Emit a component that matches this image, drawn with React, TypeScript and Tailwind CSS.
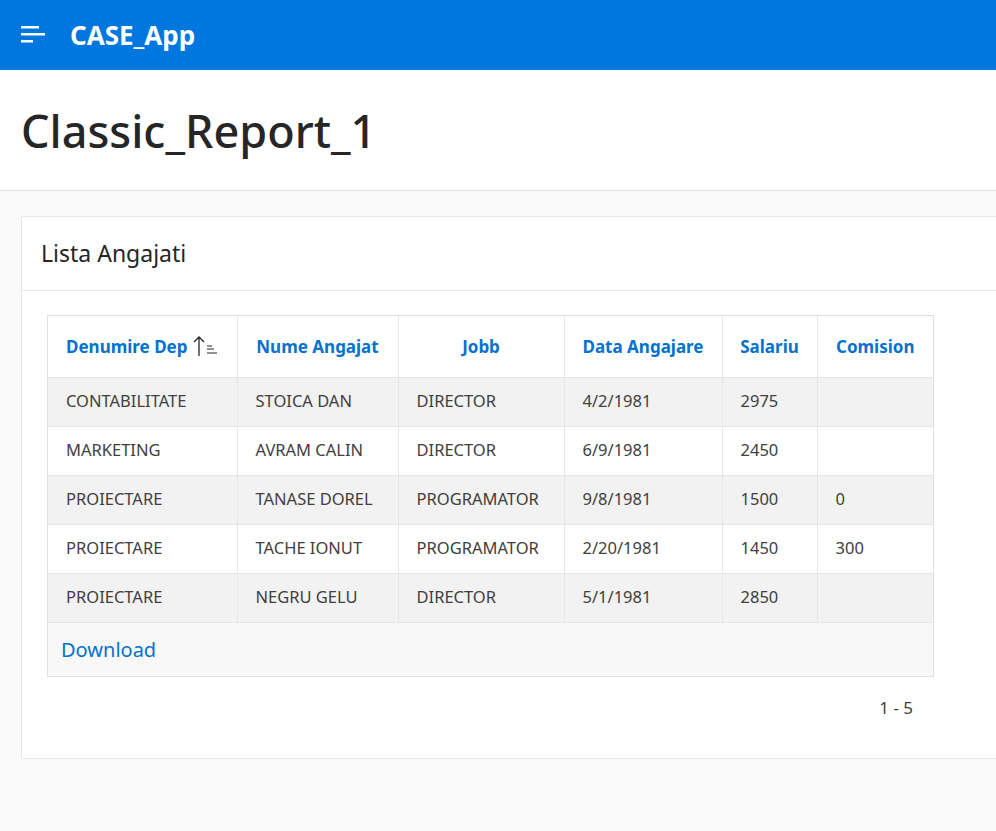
const columns = [
  { label: "Denumire Dep", width: "w-[189px]", sort: true },
  { label: "Nume Angajat", width: "w-[161px]" },
  { label: "Jobb", width: "w-[166px]" },
  { label: "Data Angajare", width: "w-[158px]" },
  { label: "Salariu", width: "w-[95px]" },
  { label: "Comision", width: "" },
];

const rows = [
  ["CONTABILITATE", "STOICA DAN", "DIRECTOR", "4/2/1981", "2975", ""],
  ["MARKETING", "AVRAM CALIN", "DIRECTOR", "6/9/1981", "2450", ""],
  ["PROIECTARE", "TANASE DOREL", "PROGRAMATOR", "9/8/1981", "1500", "0"],
  ["PROIECTARE", "TACHE IONUT", "PROGRAMATOR", "2/20/1981", "1450", "300"],
  ["PROIECTARE", "NEGRU GELU", "DIRECTOR", "5/1/1981", "2850", ""],
];

function MenuIcon() {
  return (
    <svg width="24" height="18" viewBox="0 0 24 18" aria-hidden="true">
      <rect x="0" y="0" width="18" height="2.5" fill="white" />
      <rect x="0" y="7" width="24" height="2.5" fill="white" />
      <rect x="0" y="14" width="12" height="2.5" fill="white" />
    </svg>
  );
}

function SortIcon() {
  return (
    <svg width="26" height="22" viewBox="0 0 26 22" aria-hidden="true" className="ml-[5px]">
      <path d="M6 21V2M1 7l5-5 5 5" stroke="#262626" strokeWidth="1.3" fill="none" />
      <path d="M14 11h5M14 14h7M14 18h10" stroke="#262626" strokeWidth="1.1" />
    </svg>
  );
}

export default function App() {
  return (
    <div className="min-h-[831px] overflow-hidden bg-[#fafafa] font-['Noto_Sans',sans-serif] text-[#262626]">
      <header className="flex h-[70px] items-center bg-[#0076df] pl-[21px]">
        <MenuIcon />
        <span className="ml-[25px] text-[26px] font-bold text-white">CASE_App</span>
      </header>

      <div className="flex h-[121px] items-center border-b border-[#e0e0e0] bg-white pl-[21px]">
        <h1 className="text-[45px] font-medium leading-none text-[#262626]">Classic_Report_1</h1>
      </div>

      <div className="pl-[21px] pt-[25px]">
        <section className="w-[1000px] rounded-[2px] border border-[#e6e6e6] bg-white">
          <div className="flex h-[74px] items-center border-b border-[#e6e6e6] pl-[19px]">
            <h2 className="text-[23px] text-[#262626]">Lista Angajati</h2>
          </div>
          <div className="pb-[37px] pl-[25px] pt-[24px]">
            <div className="w-[887px] border border-[#e0e0e0]">
              <table className="w-[885px] border-collapse table-fixed">
                <thead>
                  <tr className="h-[61px] bg-white">
                    {columns.map((c, i) => (
                      <th
                        key={c.label}
                        className={`${c.width} ${i > 0 ? "border-l border-[#e6e6e6]" : ""} p-0 text-[17px] font-bold text-[#0572ce]`}
                      >
                        <span className="inline-flex items-center justify-center">
                          {c.label}
                          {c.sort ? <SortIcon /> : null}
                        </span>
                      </th>
                    ))}
                  </tr>
                </thead>
                <tbody>
                  {rows.map((r, ri) => (
                    <tr key={ri} className={`h-[49px] border-t border-[#e6e6e6] ${ri % 2 === 0 ? "bg-[#f2f2f2]" : "bg-white"}`}>
                      {r.map((v, ci) => (
                        <td
                          key={ci}
                          className={`${ci > 0 ? "border-l border-[#e6e6e6]" : ""} px-[18px] text-[16.5px] text-[#404040]`}
                        >
                          {v}
                        </td>
                      ))}
                    </tr>
                  ))}
                </tbody>
              </table>
              <div className="flex h-[54px] items-center border-t border-[#e6e6e6] bg-[#f8f8f8] pl-[13px]">
                <a className="text-[20px] text-[#0572ce]">Download</a>
              </div>
            </div>
            <div className="flex w-[866px] justify-end pt-[18px] text-[17px] text-[#404040]">1 - 5</div>
          </div>
        </section>
      </div>
    </div>
  );
}
